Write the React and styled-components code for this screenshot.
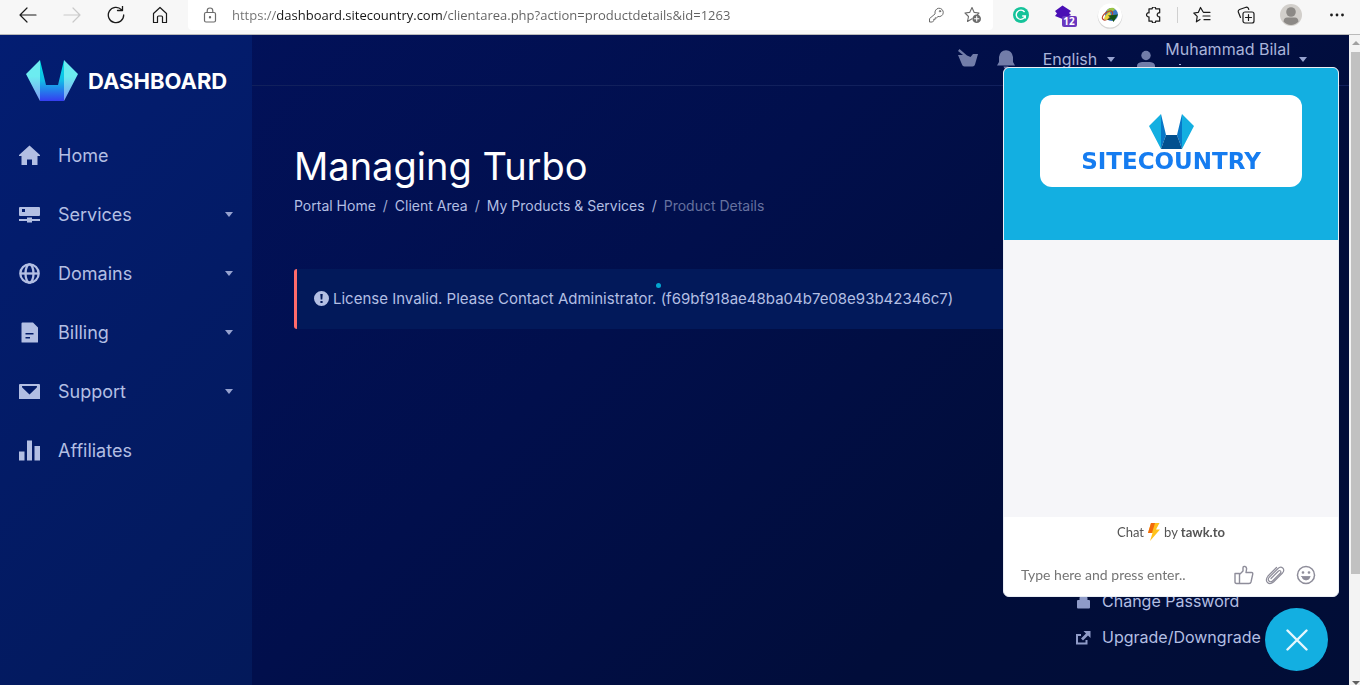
import React from "react";
import styled, { createGlobalStyle } from "styled-components";

const GlobalStyle = createGlobalStyle`
  *, *::before, *::after { box-sizing: border-box; }
  body { margin: 0; background: #010c38; }
  button, input { font: inherit; color: inherit; border: 0; padding: 0; background: none; outline: none; }
  button { cursor: pointer; }
  a { color: inherit; text-decoration: none; }
  h1, p, ul, ol { margin: 0; padding: 0; list-style: none; }
  svg { display: block; flex: none; }
`;

const Page = styled.div`
  display: flex;
  flex-direction: column;
  height: 100vh;
  overflow: hidden;
  font-family: Inter, "Liberation Sans", sans-serif;
  color: #b3bfe3;
`;

/* ---------- browser toolbar ---------- */
const Toolbar = styled.header`
  display: flex;
  align-items: flex-start;
  height: 35px;
  flex: none;
  padding-left: 6px;
  background: #f7f7f7;
  border-bottom: 1px solid #bababa;
`;
const ToolButton = styled.button`
  display: flex;
  align-items: center;
  justify-content: center;
  width: ${(p) => p.$width || 44}px;
  height: 30px;
  color: ${(p) => (p.$dim ? "#c9c9c9" : "#1b1b1b")};
`;
const Divider = styled.span`
  width: 1px;
  height: 16px;
  margin: 7px 2px;
  background: #d0d0d0;
`;
const AddressBar = styled.label`
  display: flex;
  align-items: center;
  flex: 1;
  min-width: 0;
  height: 30px;
  margin: 0 6px;
  padding: 0 10px 0 14px;
  background: #fff;
  border-radius: 0 0 4px 4px;
  color: #6b6b6b;
`;
const AddressInput = styled.input`
  flex: 1;
  min-width: 0;
  height: 20px;
  margin: 0 12px 0 14px;
  font-family: "Open Sans", "Noto Sans", sans-serif;
  font-size: 13px;
  line-height: 20px;
  background: linear-gradient(90deg, #707070 45px, #161616 45px, #161616 210px, #606060 210px);
  -webkit-background-clip: text;
  background-clip: text;
  color: transparent;
`;
const AddressAction = styled.button`
  display: flex;
  align-items: center;
  justify-content: center;
  width: 20px;
  height: 30px;
  margin-left: ${(p) => p.$gap || 0}px;
`;

/* ---------- portal ---------- */
const Viewport = styled.div`
  display: flex;
  flex: 1;
  min-height: 0;
`;
const Portal = styled.div`
  display: flex;
  flex: 1;
  min-width: 0;
  background: linear-gradient(135deg, #02125e 0%, #010f4c 45%, #010d3a 75%, #010d36 100%);
`;
const Sidebar = styled.aside`
  width: 252px;
  flex: none;
  background: linear-gradient(135deg, #031d72 0%, #031b66 50%, #03195a 100%);
`;
const Brand = styled.a`
  display: flex;
  align-items: center;
  gap: 10px;
  height: 91px;
  padding: 1px 24px 0;
  color: #fff;
  font-size: 22px;
  font-weight: 700;
`;
const NavItem = styled.button`
  display: flex;
  align-items: center;
  width: 100%;
  height: 59px;
  padding: 0 19px;
  font-size: 18px;
  text-align: left;
  color: #b3bfe3;

  span { flex: 1; margin-left: 18px; }
`;
const Caret = styled.i`
  flex: none;
  border: 4px solid transparent;
  border-top: 5px solid #96a2cf;
  border-bottom: 0;
`;

const Main = styled.main`
  display: flex;
  flex-direction: column;
  flex: 1;
  min-width: 0;
`;
const TopBar = styled.div`
  display: flex;
  justify-content: flex-end;
  height: 51px;
  padding: 0 42px 0 0;
  border-bottom: 1px solid #11205c;
  font-size: 16px;
`;
const TopItem = styled.button`
  display: flex;
  align-items: center;
  gap: ${(p) => p.$gap || 0}px;
  height: 48px;
  margin-left: ${(p) => p.$space || 0}px;
  color: #a9b4da;

  > svg { color: #727da9; }
`;
const UserName = styled.span`
  display: block;
  height: 40px;
  line-height: 20px;
  text-align: left;

  &::after {
    content: "";
    display: block;
    width: 2px;
    height: 1px;
    margin: 5px 0 0 14px;
    background: currentColor;
  }
`;
const Content = styled.div`
  display: flex;
  flex-direction: column;
  flex: 1;
  padding: 55px 42px 30px;
`;
const Title = styled.h1`
  font-size: 38px;
  font-weight: 400;
  line-height: 50px;
  color: #fff;
`;
const Breadcrumb = styled.ol`
  display: flex;
  gap: 7px;
  margin-top: 5px;
  font-size: 14px;
  line-height: 20px;
  color: #b3bfe3;
  white-space: nowrap;

  li { display: flex; gap: 7px; }
  li + li::before { content: "/"; color: #a0abd2; }
  li:last-child { color: #66719f; }
`;
const Alert = styled.div`
  position: relative;
  display: flex;
  align-items: center;
  gap: 4px;
  height: 60px;
  margin-top: 53px;
  padding: 0 17px 2px;
  border-left: 3px solid #ff6b6b;
  border-radius: 3px;
  background: #02195a;
  font-size: 15px;
  white-space: nowrap;
`;
const LoaderDot = styled.i`
  position: absolute;
  left: 359px;
  top: 14px;
  width: 5px;
  height: 5px;
  border-radius: 50%;
  background: #04a6cf;
`;
const Actions = styled.ul`
  align-self: flex-end;
  width: 231px;
  margin-top: auto;
  font-size: 16px;

  a { display: flex; align-items: center; gap: 11px; height: 36px; white-space: nowrap; }
  svg { color: #8f9bc8; }
`;

const ScrollTrack = styled.div`
  display: flex;
  flex-direction: column;
  justify-content: space-between;
  width: 11px;
  flex: none;
  padding: 6px 0 0 2px;
  background: #f3f3f3;
`;
const ScrollArrow = styled.i`
  align-self: center;
  border: 4px solid transparent;
  border-top: ${(p) => (p.$down ? "4px solid #606060" : "0")};
  border-bottom: ${(p) => (p.$down ? "0" : "4px solid #a0a0a0")};
`;
const ScrollThumb = styled.div`
  height: 81%;
  margin: 7px 0 auto;
  background: #c1c1c1;
`;

/* ---------- chat widget ---------- */
const Chat = styled.section`
  position: fixed;
  right: 21px;
  bottom: 88px;
  display: flex;
  flex-direction: column;
  width: 336px;
  height: 530px;
  overflow: hidden;
  border: 1px solid #e9eef4;
  border-radius: 6px;
  background: #fff;
  font-family: Lato, "Liberation Sans", sans-serif;
`;
const ChatHeader = styled.div`
  display: flex;
  justify-content: center;
  height: 172px;
  padding-top: 27px;
  background: #13afe1;
`;
const LogoCard = styled.div`
  display: flex;
  flex-direction: column;
  align-items: center;
  width: 262px;
  height: 92px;
  padding-top: 18px;
  border-radius: 12px;
  background: #fff;
  font-family: "DejaVu Sans", sans-serif;
  font-size: 23px;
  font-weight: 700;
  line-height: 22px;
  color: #157cf0;
`;
const Messages = styled.div`
  flex: 1;
  background: #f6f6f9;
`;
const PoweredBy = styled.p`
  display: flex;
  align-items: center;
  justify-content: center;
  gap: 3px;
  height: 30px;
  font-size: 13px;
  color: #545454;
`;
const Composer = styled.form`
  display: flex;
  align-items: center;
  gap: 11px;
  height: 49px;
  padding: 7px 22px 0 17px;
  color: #8e8d9a;

  input { flex: 1; min-width: 0; font-size: 14px; line-height: 20px; color: #444; }
  input::placeholder { color: #757575; opacity: 1; }
`;
const ComposerButton = styled.button`
  display: flex;
`;
const CloseChat = styled.button`
  position: fixed;
  right: 32px;
  bottom: 14px;
  display: flex;
  align-items: center;
  justify-content: center;
  width: 63px;
  height: 63px;
  border-radius: 50%;
  background: #13afe1;
  color: #e6f7fd;
`;

/* ---------- drawings ---------- */
const Line = ({ size = 18, box = 18, w = 1.2, children }) => (
  <svg width={size} height={size} viewBox={`0 0 ${box} ${box}`} fill="none" stroke="currentColor" strokeWidth={w} strokeLinecap="round" strokeLinejoin="round" aria-hidden="true">{children}</svg>
);
const Solid = ({ size = 21, box = 21, children }) => (
  <svg width={size} height={size} viewBox={`0 0 ${box} ${box}`} fill="currentColor" aria-hidden="true">{children}</svg>
);

const navIcons = {
  Home: <Solid><path d="M10.500 .5 0 10v1h2.500v9h5.500v-5.500h5V20h5.500v-9H21v-1Z" /></Solid>,
  Services: <Solid><path fillRule="evenodd" d="M1 3h19q1 0 1 1v7q0 1-1 1H1q-1 0-1-1V4q0-1 1-1Zm2 2v3h3v-3Z" /><path d="M0 15h8v-1.500h5V15h8v2h-8v1.500H8V17H0Z" /></Solid>,
  Domains: <Solid><g fill="none" stroke="currentColor" strokeWidth="2.300"><circle cx="10.500" cy="10.500" r="9.200" /><ellipse cx="10.500" cy="10.500" rx="4" ry="9.200" /><path d="M1.500 10.500h18" /></g></Solid>,
  Billing: <Solid><path fillRule="evenodd" d="M3.500 .5H14l5 5V20q0 .5-.5.500H3Q2.500 20.500 2.500 20V1.500q0-1 1-1ZM6.500 11v1.600h8V11Zm0 4v1.600h4.500V15Z" /></Solid>,
  Support: <Solid><path fillRule="evenodd" d="M1 3h19q1 0 1 1v14H0V4q0-1 1-1Zm2 2 .2 1.500 7.300 7 7.300-7L18 5Z" /></Solid>,
  Affiliates: <Solid><path d="M0 11.500h5.500v9H0ZM8 .5h5v20H8ZM15.500 6H21v14.500h-5.500Z" /></Solid>,
};

const navItems = [
  ["Home", false], ["Services", true], ["Domains", true],
  ["Billing", true], ["Support", true], ["Affiliates", false],
];

const BrandMark = () => (
  <svg width="54" height="42" viewBox="0 0 54 42" aria-hidden="true">
    <defs>
      <linearGradient id="wing" x1="0" y1="0" x2="0" y2="1"><stop offset=".4" stopColor="#6cecf0" /><stop offset="1" stopColor="#7f9bf5" /></linearGradient>
      <linearGradient id="inner" x1="0" y1="0" x2="0" y2="1"><stop offset="0" stopColor="#00e5e3" /><stop offset=".5" stopColor="#12bce8" /><stop offset="1" stopColor="#363df0" /></linearGradient>
    </defs>
    <path fill="url(#inner)" d="M16 0 22 25H34L40 0V41H16Z" />
    <path fill="url(#wing)" d="M16 0 2 14 16 41ZM40 0 54 14 40 41Z" />
  </svg>
);
const SiteMark = () => (
  <svg width="46" height="37" viewBox="0 0 46 37" aria-hidden="true">
    <path fill="#0878c8" d="M13 1 18 22 13 36ZM34 1 29 22 34 36Z" />
    <path fill="#13afe1" d="M13 1 1 13 13 36ZM34 1 46 13 34 36Z" />
    <path fill="#02508f" d="M18 22H29L34 36H13Z" />
  </svg>
);

const BrowserBar = () => (
  <Toolbar>
    <ToolButton aria-label="Back"><Line><path d="M17 9H1.500M8 2 1 9l7 7" /></Line></ToolButton>
    <ToolButton aria-label="Forward" $dim><Line><path d="M1 9h15.500M10 2l7 7-7 7" /></Line></ToolButton>
    <ToolButton aria-label="Refresh"><Line><path d="M16.700 9A7.700 7.700 0 1 1 14.500 3.600M10.500 4.500h5V0" strokeWidth="1.300" /></Line></ToolButton>
    <ToolButton aria-label="Browser home"><Line><path d="M2.500 7.500 9 1.500l6.500 6V16.500H11.500V11q0-1-1-1h-3q-1 0-1 1v5.500H2.500Z" /></Line></ToolButton>
    <AddressBar>
      <Line size={16} box={16}><rect x="2.500" y="5.500" width="11" height="9.500" rx="1.500" /><path d="M5.200 5.500V3.800a2.800 2.800 0 0 1 5.600 0v1.700" /><circle cx="8" cy="10.300" r=".6" fill="currentColor" /></Line>
      <AddressInput aria-label="Address" spellCheck="false" defaultValue="https://dashboard.sitecountry.com/clientarea.php?action=productdetails&id=1263" />
      <AddressAction aria-label="Passwords" type="button"><Line size={16} box={16} w={1}><path d="M7 6.500a4.200 4.200 0 1 1 3 3L8.700 10.800H7.200v1.500H5.700v1.500L4.500 15H1.500v-3Z" /><circle cx="12" cy="4.200" r=".7" /></Line></AddressAction>
      <AddressAction aria-label="Add to favorites" type="button" $gap={17}>
        <Line size={18} w={1.1}><path d="M8 12.800 3.500 15.500l1-5L1 7l4.700-.6L8 1.500l2.200 4.900L15 7l-1.500 1.500" /><circle cx="12.700" cy="12.700" r="4.300" fill="currentColor" stroke="none" /><path stroke="#fff" d="M10.500 12.700h4.400M12.700 10.500v4.400" /></Line>
      </AddressAction>
    </AddressBar>
    <ToolButton aria-label="Grammarly">
      <svg width="16" height="16" viewBox="0 0 16 16"><circle cx="8" cy="8" r="8" fill="#15c39a" /><path d="M11.600 5A4.600 4.600 0 1 0 12.300 9H9.200M12.300 9v2.600" fill="none" stroke="#fff" strokeWidth="1.400" /></svg>
    </ToolButton>
    <ToolButton aria-label="Extension, 12 items" $width={46}>
      <svg width="24" height="24" viewBox="0 0 24 24">
        <path d="M8.500 2.500 17 8 15 10 17 12 8.500 16 1 13 3 10.500 1 8Z" fill="#4a0fb5" />
        <rect x="8" y="13" width="15" height="11" rx="2" fill="#6a38bf" />
        <text x="15" y="22" textAnchor="middle" fill="#fff" fontFamily="Open Sans, sans-serif" fontWeight="700" fontSize="10">12</text>
      </svg>
    </ToolButton>
    <ToolButton aria-label="Download manager" $width={42}>
      <svg width="28" height="28" viewBox="0 0 28 28">
        <circle cx="14" cy="15.500" r="12.300" fill="#d5d5d5" /><circle cx="14" cy="14.500" r="12" fill="#fff" />
        <circle cx="15.500" cy="13.500" r="6.500" fill="#3b78c4" />
        <path d="M11 9q3-3 7-2l1 2-4 2-4 1Z" fill="#9cc545" />
        <ellipse cx="11.500" cy="14.500" rx="6" ry="3.200" transform="rotate(-38 11.500 14.500)" fill="none" stroke="#b8442c" strokeWidth="1.300" />
        <path d="M8 18q1-5 6-7l1 3-4 5Z" fill="#e8d23c" />
        <path d="M12 14.500 22 13.500 17.500 21 16 18.500 11 19 14.500 16.500Z" fill="#145214" />
      </svg>
    </ToolButton>
    <ToolButton aria-label="Extensions"><Line size={16} w={1.400}><path d="M4.500 2H8a2 2 0 0 1 4 0h4.500V6.500a2.300 2.300 0 1 0 0 4.500v5H12a2 2 0 0 1-4 0H4.500V11a2.300 2.300 0 1 1 0-4.500Z" /></Line></ToolButton>
    <Divider />
    <ToolButton aria-label="Favorites"><Line><path d="M10 5.800 7.500 1.500 5.400 6.300.8 7l3.400 3.400-.8 5.400L7 13.500M10.500 6.300H17M10 10h7M11 13.700h6" /></Line></ToolButton>
    <ToolButton aria-label="Collections"><Line><rect x="6" y="6" width="11" height="11" rx="2" /><path d="M3.500 11.500 1.200 5.800Q1 4.200 2.500 3.500L9 1.300q1.700-.5 2.300 1L11.800 3.500M11.500 8.500v6M8.500 11.500h6" /></Line></ToolButton>
    <ToolButton aria-label="Profile" $width={46}>
      <svg width="22" height="22" viewBox="0 0 22 22"><circle cx="11" cy="11" r="11" fill="#d2cfcb" /><circle cx="11" cy="8" r="4.800" fill="#8c8986" /><path d="M3.500 17.500Q4 13.500 7 13.500h8q3 0 3.500 4A10 10 0 0 1 3.500 17.500Z" fill="#8c8986" /></svg>
    </ToolButton>
    <ToolButton aria-label="Settings and more" $width={46}><Solid size={16} box={16}><circle cx="2.500" cy="8" r="1.400" /><circle cx="8" cy="8" r="1.400" /><circle cx="13.500" cy="8" r="1.400" /></Solid></ToolButton>
  </Toolbar>
);

export default function App() {
  return (
    <Page>
      <GlobalStyle />
      <BrowserBar />
      <Viewport>
        <Portal>
          <Sidebar>
            <Brand href="#"><BrandMark />DASHBOARD</Brand>
            <nav>
              {navItems.map(([label, menu]) => (
                <NavItem key={label}>{navIcons[label]}<span>{label}</span>{menu && <Caret />}</NavItem>
              ))}
            </nav>
          </Sidebar>
          <Main>
            <TopBar>
              <TopItem aria-label="Cart"><Solid size={20} box={20}><path d="M0 2 1.500 0 9 6.500 12.500 8 15 5H20L17 15.500Q16.500 17.500 14.500 17.500h-8Q4.500 17.500 4 15.500L0 6H5Z" /></Solid></TopItem>
              <TopItem aria-label="Notifications" $space={18}><Solid size={20} box={20}><path d="M1 16.500 3 13V8Q4 1.500 10 1.200 16 1.500 17 8V13l2 3.500ZM7.500 17.500h5q-.5 2.500-2.500 2.500T7.500 17.500Z" /></Solid></TopItem>
              <TopItem $space={27} $gap={10}>English<Caret /></TopItem>
              <TopItem $space={21} $gap={9}>
                <Solid size={20} box={20}><circle cx="10" cy="6.500" r="4.700" /><path d="M1 20v-3q0-3.500 5-4h8q5 .5 5 4v3Z" /></Solid>
                <UserName>Muhammad Bilal</UserName>
                <Caret />
              </TopItem>
            </TopBar>
            <Content>
              <Title>Managing Turbo</Title>
              <Breadcrumb>
                <li><a href="#">Portal Home</a></li>
                <li><a href="#">Client Area</a></li>
                <li><a href="#">My Products &amp; Services</a></li>
                <li>Product Details</li>
              </Breadcrumb>
              <Alert role="alert">
                <Solid size={15} box={15}><path fillRule="evenodd" d="M7.500 0a7.500 7.500 0 1 1 0 15 7.500 7.500 0 0 1 0-15ZM6.300 3l.4 5.500h1.600L8.700 3Zm.1 7v2h2.200v-2Z" /></Solid>
                License Invalid. Please Contact Administrator. (f69bf918ae48ba04b7e08e93b42346c7)
                <LoaderDot />
              </Alert>
              <Actions>
                <li><a href="#"><Solid size={15} box={15}><path d="M2 6h1.500V4Q4 .5 7.500 .5T11.500 4V6H13q1 0 1 1v6.500q0 1-1 1H2q-1 0-1-1V7q0-1 1-1Z" /></Solid>Change Password</a></li>
                <li><a href="#"><Solid size={15} box={15}><path d="M7.500 1H14.500V8L12 5.500 7 10.500 5 8.500 10 3.500ZM0 4h5v2H2v6.500h7.500V10h2v4.500H0Z" /></Solid>Upgrade/Downgrade</a></li>
              </Actions>
            </Content>
          </Main>
        </Portal>
        <ScrollTrack aria-hidden="true"><ScrollArrow /><ScrollThumb /><ScrollArrow $down /></ScrollTrack>
      </Viewport>

      <Chat aria-label="Chat">
        <ChatHeader><LogoCard><SiteMark />SITECOUNTRY</LogoCard></ChatHeader>
        <Messages />
        <PoweredBy>
          Chat
          <svg width="14" height="18" viewBox="0 0 14 18" aria-hidden="true"><path fill="#ffc21c" d="M4 0H12.500L9 6.500H13L3 18 5.500 10H1Z" /><path fill="#f26a0c" d="M4 0H8L5 10H1Z" /></svg>
          by <strong>tawk.to</strong>
        </PoweredBy>
        <Composer>
          <input aria-label="Message" placeholder="Type here and press enter.." />
          <ComposerButton type="button" aria-label="Like"><Line size={20} box={20} w={1.4}><path d="M1 8.500h4.500v10H2.500Q1 18.500 1 17ZM5.500 9.500 9 6V3Q9 1 11 1.500t1.500 3L12 7.500h5.500q1.500 0 1.200 1.800L17 17q-.4 1.500-2 1.500H5.500" /></Line></ComposerButton>
          <ComposerButton type="button" aria-label="Attach"><Line size={20} box={20} w={1.2}><path d="M6 13.500 13.500 6q1.200-1 2 0t0 2L7.500 16Q5.500 17.500 4 16T4 12.500L13 3.500Q15.500 1 17.700 3T17.500 8L8.500 17Q5 20 2.500 17.500T3 11L11.500 2.500" /></Line></ComposerButton>
          <ComposerButton type="button" aria-label="Emoji"><Line size={20} box={20} w={1.5}><circle cx="10" cy="10" r="8.500" /><path fill="currentColor" strokeWidth=".8" d="M5.800 11.500h8.400q-1 3.500-4.200 3.500t-4.200-3.500Z" /><circle cx="7" cy="7.500" r=".6" fill="currentColor" /><circle cx="13" cy="7.500" r=".6" fill="currentColor" /></Line></ComposerButton>
        </Composer>
      </Chat>
      <CloseChat aria-label="Close chat"><Line size={22} box={22} w={2.4}><path d="M1.500 1.500l19 19M20.500 1.500l-19 19" /></Line></CloseChat>
    </Page>
  );
}
